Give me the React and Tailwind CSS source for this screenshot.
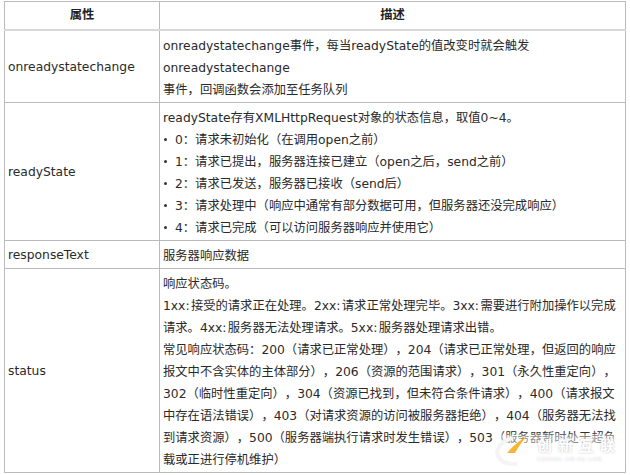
const font = "font-['DejaVu_Sans','Noto_Sans_CJK_SC',sans-serif]";

const rows = [
  {
    name: 'onreadystatechange',
    lines: ['onreadystatechange事件，每当readyState的值改变时就会触发', 'onreadystatechange', '事件，回调函数会添加至任务队列'],
  },
  {
    name: 'readyState',
    lines: ['readyState存有XMLHttpRequest对象的状态信息，取值0~4。'],
    items: [
      '0：请求未初始化（在调用open之前）',
      '1：请求已提出，服务器连接已建立（open之后，send之前）',
      '2：请求已发送，服务器已接收（send后）',
      '3：请求处理中（响应中通常有部分数据可用，但服务器还没完成响应）',
      '4：请求已完成（可以访问服务器响应并使用它）',
    ],
  },
  { name: 'responseText', lines: ['服务器响应数据'] },
  {
    name: 'status',
    lines: [
      '响应状态码。',
      '1xx:接受的请求正在处理。2xx:请求正常处理完毕。3xx:需要进行附加操作以完成',
      '请求。4xx:服务器无法处理请求。5xx:服务器处理请求出错。',
      '常见响应状态码：200（请求已正常处理），204（请求已正常处理，但返回的响应',
      '报文中不含实体的主体部分），206（资源的范围请求），301（永久性重定向），',
      '302（临时性重定向），304（资源已找到，但未符合条件请求），400（请求报文',
      '中存在语法错误），403（对请求资源的访问被服务器拒绝），404（服务器无法找',
      '到请求资源），500（服务器端执行请求时发生错误），503（服务器暂时处于超负',
      '载或正进行停机维护）',
    ],
  },
];

// the colon after 1xx, 2xx... sits wider in the picture
const Line = ({ text }) => (
  <div className="whitespace-nowrap">
    {text.split(/(?<=:)/).map((part, n) => (
      <span key={n} className={part.endsWith(':') ? 'pr-[1.4px]' : ''}>{part}</span>
    ))}
  </div>
);

export default function App() {
  return (
    <div className={`relative w-[630px] h-[475px] bg-white overflow-hidden pt-px pl-1 text-[12.3px] leading-[22px] text-[#2a2a2a] [text-spacing-trim:space-all] ${font}`}>
      <table className="w-[622px] table-fixed border-collapse">
        <thead>
          <tr className="border-b-2 border-[#d8d8d8]">
            <th className="w-[155px] h-[28px] p-0 border border-[#bbb] border-b-[#d8d8d8] font-bold text-[#222] text-center">属性</th>
            <th className="h-[28px] p-0 border border-[#bbb] border-b-[#d8d8d8] font-bold text-[#222] text-center">描述</th>
          </tr>
        </thead>
        <tbody>
          {rows.map(r => (
            <tr key={r.name}>
              <td className="border border-[#bbb] px-[3px] pt-[2px] pb-0 align-middle whitespace-nowrap">{r.name}</td>
              <td className="border border-[#bbb] pl-[3px] pr-0 pt-[4px] pb-[1px] align-top">
                {r.lines.map(l => (
                  <Line key={l} text={l} />
                ))}
                {r.items && r.items.map(i => (
                  <div key={i} className="flex items-center whitespace-nowrap">
                    <span className="w-[3px] h-[3px] rounded-full bg-[#333] ml-[1px] mr-[8px]"></span>
                    {i}
                  </div>
                ))}
              </td>
            </tr>
          ))}
        </tbody>
      </table>

      {/* watermark */}
      <div className="absolute left-[494px] top-[434px] w-[130px] h-[32px] bg-white/45 blur-[1px] rounded-sm"></div>
      <div className="absolute left-[494px] top-[434px] w-[130px] h-[32px] flex items-center">
        <svg width="42" height="32" viewBox="0 0 42 32" fill="none">
          <path d="M19 4C8 6 1 15 4 22c2 5 9 8 19 8" stroke="#f4f4f4" strokeWidth="4" />
          <path d="M13 19C19 12 25 7 33 2c-5 6-9 11-12 17z" fill="#f3b731" />
        </svg>
        <div className="flex flex-col text-white leading-none ml-[1px] [text-shadow:0_0_2px_#bbb]">
          <span className="text-[15px] font-bold tracking-[6px] whitespace-nowrap">创新互联</span>
          <span className="text-[5px] mt-[3px] tracking-[0.6px] whitespace-nowrap">CHUANG XIN HU LIAN</span>
        </div>
      </div>
    </div>
  );
}
